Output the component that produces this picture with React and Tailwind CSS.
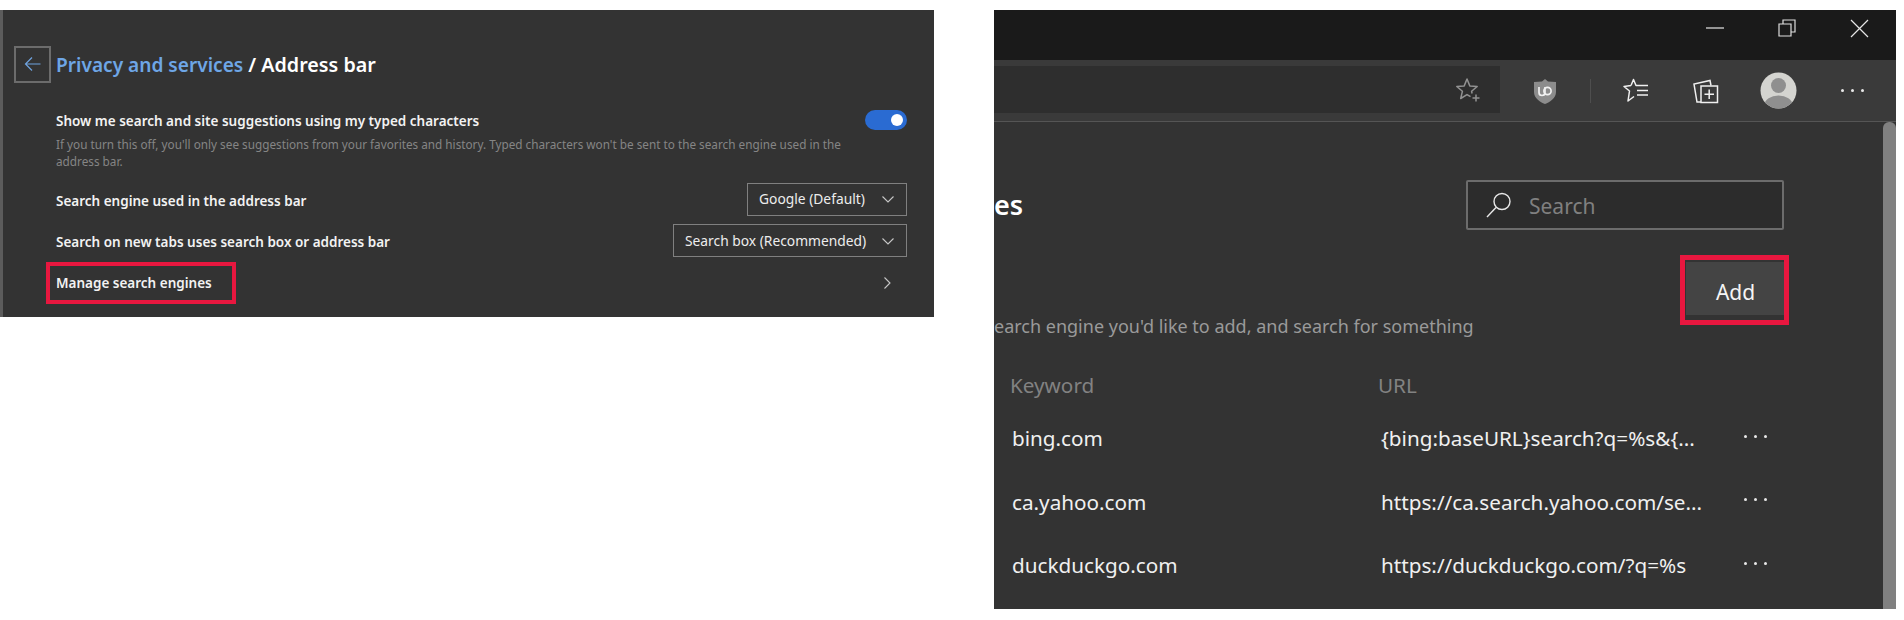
const font = "[font-family:'Noto_Sans','Open_Sans',sans-serif]";

function Chevron() {
  return (
    <svg width="14" height="9" viewBox="0 0 14 9" fill="none" stroke="#c8c8c8" strokeWidth="1.1">
      <path d="M1.5 1.5 7 7l5.5-5.5" />
    </svg>
  );
}

function Select({ label, className }) {
  return (
    <div className={`flex items-center justify-between border border-[#808080] pl-[11px] pr-[11px] text-[13.8px] text-[#ededed] ${className}`}>
      <span className="whitespace-nowrap">{label}</span>
      <Chevron />
    </div>
  );
}

function LeftPanel() {
  return (
    <section className="w-[934px] h-[307px] shrink-0 bg-[#333333] border-l-[3px] border-[#5c5c5c] pl-[11px] pr-[27px] flex flex-col">
      <header className="flex items-center gap-[5px] mt-[36px] h-[36px]">
        <div className="w-[37px] h-[37px] border-2 border-[#6c6c6c] flex items-center justify-center">
          <svg width="18" height="16" viewBox="0 0 18 16" fill="none" stroke="#6fa3e0" strokeWidth="1.2">
            <path d="M16.5 8H1.5M8 1.5 1.5 8 8 14.5" />
          </svg>
        </div>
        <h1 className="text-[19.7px] font-semibold text-white leading-[26px] whitespace-nowrap pt-[1px]">
          <span className="text-[19.1px] text-[#6ea6e6]">Privacy and services</span> / Address bar
        </h1>
      </header>

      <div className="pl-[42px] mt-[29px] flex justify-between items-start">
        <div>
          <div className="text-[13.5px] font-semibold leading-[20px] text-[#f2f2f2]">
            Show me search and site suggestions using my typed characters
          </div>
          <div className="text-[11.75px] leading-[17px] text-[#858585] mt-[5px] whitespace-nowrap">
            If you turn this off, you'll only see suggestions from your favorites and history. Typed characters won't be sent to the search engine used in the
            <br />
            address bar.
          </div>
        </div>
        <div className="w-[42px] h-[20px] rounded-full bg-[#2a6bd2] flex items-center justify-end pr-[4px] shrink-0 -mt-[1px]">
          <div className="w-[12px] h-[12px] rounded-full bg-white" />
        </div>
      </div>

      <div className="pl-[42px] mt-[13px] flex justify-between items-center h-[33px]">
        <div className="text-[13.5px] font-semibold text-[#f2f2f2] pt-[3px]">Search engine used in the address bar</div>
        <Select label="Google (Default)" className="w-[160px] h-[33px]" />
      </div>

      <div className="pl-[42px] mt-[8px] flex justify-between items-center h-[33px]">
        <div className="text-[13.5px] font-semibold text-[#f2f2f2] pt-[3px]">Search on new tabs uses search box or address bar</div>
        <Select label="Search box (Recommended)" className="w-[234px] h-[33px] pt-[1px]" />
      </div>

      <div className="pl-[42px] mt-[5px] flex justify-between items-center h-[42px] pr-[14px] relative">
        <div className="text-[13.5px] font-semibold text-[#f2f2f2]">Manage search engines</div>
        <svg width="9" height="14" viewBox="0 0 9 14" fill="none" stroke="#c8c8c8" strokeWidth="1.1" className="mr-[1px]">
          <path d="M1.5 1.5 7 7l-5.5 5.5" />
        </svg>
        <div className="absolute left-[32px] top-0 w-[190px] h-[42px] border-[4px] border-[#e8173f]" />
      </div>
    </section>
  );
}

function ToolbarSlot({ children, className = "" }) {
  return <div className={`w-[70px] h-full flex items-center justify-center ${className}`}>{children}</div>;
}

function TitleBar() {
  return (
    <div className="h-[50px] bg-[#1a1a1a] flex justify-end pr-[1px] pt-[1px]">
      <div className="w-[72px] h-[34px] flex items-center justify-center">
        <svg width="18" height="2"><path d="M0 1h18" stroke="#e6e6e6" strokeWidth="1.2" /></svg>
      </div>
      <div className="w-[72px] h-[34px] flex items-center justify-center">
        <svg width="18" height="18" viewBox="0 0 18 18" fill="none" stroke="#dedede" strokeWidth="1.2">
          <path d="M1 5h12v12H1zM5 5V1h12v12h-4" />
        </svg>
      </div>
      <div className="w-[72px] h-[34px] flex items-center justify-center">
        <svg width="19" height="19" viewBox="0 0 19 19" fill="none" stroke="#e6e6e6" strokeWidth="1.2">
          <path d="M1 1l17 17M18 1 1 18" />
        </svg>
      </div>
    </div>
  );
}

function Toolbar() {
  return (
    <div className="h-[62px] bg-[#3a3a3a] border-b border-[#555555] flex items-center">
      <div className="w-[506px] h-[47px] -mt-[2px] bg-[#2e2e2e] flex items-center justify-end pr-[19px]">
        <svg width="26" height="26" viewBox="0 0 26 26" fill="none" stroke="#929292" strokeWidth="1.5" strokeLinejoin="round">
          <path d="M15.5 19.7 12 17.6 5.7 21.5 7.4 14.3 1.8 9.5 9.2 8.9 12 2l2.8 6.9 7.4.6-5.6 4.8.5 2.2" />
          <path d="M21 17.5v7M17.5 21h7" />
        </svg>
      </div>
      <div className="flex items-center h-full pl-[10px]">
        <ToolbarSlot>
          <svg width="24" height="26" viewBox="0 0 24 26">
            <path d="M12 1 15 3.5 23 4V14C23 20 17 24 12 26 7 24 1 20 1 14V4L9 3.5z" fill="#8c8c8c" />
            <path d="M6 9v5.5a3 3 0 0 0 6 0V9" fill="none" stroke="#f0f0f0" strokeWidth="1.7" />
            <circle cx="14.5" cy="13" r="3.6" fill="none" stroke="#f0f0f0" strokeWidth="1.7" />
          </svg>
        </ToolbarSlot>
        <div className="w-[1px] h-[24px] bg-[#4e4e4e] mx-[10px]" />
        <ToolbarSlot>
          <svg width="26" height="25" viewBox="0 0 26 25" fill="none" stroke="#f0f0f0" strokeWidth="1.5" strokeLinejoin="round">
            <path d="M8 7.5 10.5 1.5 13 7.5H25M14 12.5H25M14 17H25M8 7.5 1 8.5 6.5 13 5 23l6-4.5" />
          </svg>
        </ToolbarSlot>
        <ToolbarSlot>
          <svg width="26" height="26" viewBox="0 0 26 26" fill="none" stroke="#f0f0f0" strokeWidth="1.5">
            <path d="M8 24 4 24 1 6 17 2.5l1 5" />
            <path d="M8 8h16.5v16.5H8z" />
            <path d="M16.2 11.5v9.5M11.5 16.2h9.5" />
          </svg>
        </ToolbarSlot>
        <ToolbarSlot className="ml-[2px]">
          <svg width="37" height="37" viewBox="0 0 37 37">
            <defs>
              <clipPath id="avatarClip">
                <circle cx="18.5" cy="18.5" r="18" />
              </clipPath>
            </defs>
            <circle cx="18.5" cy="18.5" r="18" fill="#d4d4d0" />
            <circle cx="18.5" cy="13.5" r="7.5" fill="#8f8f8f" />
            <ellipse cx="18.5" cy="33" rx="14" ry="9.5" fill="#8f8f8f" clipPath="url(#avatarClip)" />
          </svg>
        </ToolbarSlot>
        <ToolbarSlot className="ml-[4px]">
          <Dots />
        </ToolbarSlot>
      </div>
    </div>
  );
}

function Dots() {
  return (
    <div className="flex gap-[7px]">
      <div className="w-[3px] h-[3px] rounded-full bg-[#e8e8e8]" />
      <div className="w-[3px] h-[3px] rounded-full bg-[#e8e8e8]" />
      <div className="w-[3px] h-[3px] rounded-full bg-[#e8e8e8]" />
    </div>
  );
}

const rows = [
  { k: "bing.com", u: "{bing:baseURL}search?q=%s&{..." },
  { k: "ca.yahoo.com", u: "https://ca.search.yahoo.com/se..." },
  { k: "duckduckgo.com", u: "https://duckduckgo.com/?q=%s" },
];

function Content() {
  return (
    <div className="flex-1 min-w-0">
      <div className="mt-[58px] h-[50px] flex justify-between items-center pr-[99px]">
        <div className="text-[27px] font-semibold leading-[36px] text-white">es</div>
        <div className="w-[318px] h-[50px] border-2 border-[#6c6c6c] bg-[#2c2c2c] rounded-[2px] flex items-center pl-[17px] gap-[16px]">
          <svg width="28" height="28" viewBox="0 0 28 28" fill="none" stroke="#e8e8e8" strokeWidth="1.4">
            <circle cx="17" cy="10.5" r="8" />
            <path d="M11 16.5 2 26" />
          </svg>
          <span className="text-[21px] text-[#808080] pt-[3px]">Search</span>
        </div>
      </div>

      <div className="mt-[32px] flex justify-end pr-[98px]">
        <div className="relative w-[99px] h-[53px] bg-[#444444] flex items-center justify-center text-[21px] text-[#f5f5f5] pt-[8px]">
          Add
          <div className="absolute -left-[6px] -top-[7px] w-[109px] h-[70px] border-[5px] border-[#e8173f]" />
        </div>
      </div>

      <div className="h-[24px] -mt-[1px] leading-[24px] text-[18px] text-[#9a9a9a] whitespace-nowrap">
        earch engine you'd like to add, and search for something
      </div>

      <div className="mt-[27px] pl-[16px] grid grid-cols-[368px_366px_1fr] text-[20.7px] text-[#f0f0f0]">
        <div className="h-[42px] pb-[1px] flex items-center text-[#828282]">Keyword</div>
        <div className="h-[42px] pb-[1px] flex items-center text-[#828282]">URL</div>
        <div />
        {rows.map((r) => (
          <div key={r.k} className="contents">
            <div className="h-[63.5px] flex items-center pl-[2px] whitespace-nowrap">{r.k}</div>
            <div className="h-[63.5px] flex items-center pl-[3px] whitespace-nowrap">{r.u}</div>
            <div className="h-[63.5px] flex items-center pb-[5px]"><Dots /></div>
          </div>
        ))}
      </div>
    </div>
  );
}

function RightPanel() {
  return (
    <section className="w-[902px] h-[599px] shrink-0 bg-[#333333] flex flex-col overflow-hidden">
      <TitleBar />
      <Toolbar />
      <div className="flex flex-1 min-h-0">
        <Content />
        <div className="w-[13px] bg-[#808080] rounded-t-[6px]" />
      </div>
    </section>
  );
}

export default function App() {
  return (
    <div className={`${font} w-[1904px] h-[620px] bg-white pt-[10px] flex items-start gap-[60px] overflow-hidden`}>
      <LeftPanel />
      <RightPanel />
    </div>
  );
}
